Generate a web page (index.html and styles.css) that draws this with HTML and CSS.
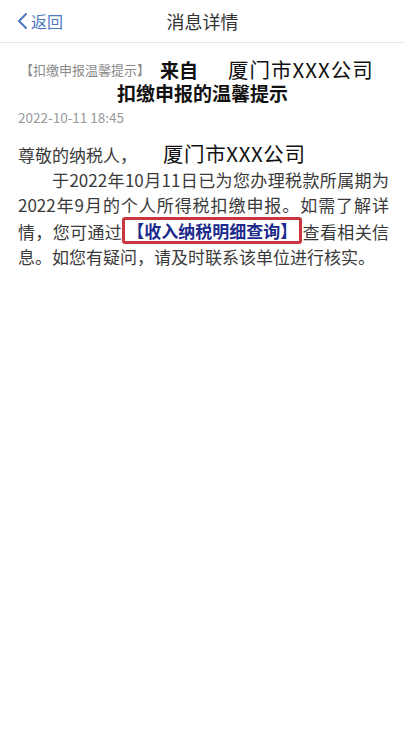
FILE: index.html
```html
<!DOCTYPE html>
<html lang="zh-CN">
<head>
<meta charset="utf-8">
<title>消息详情</title>
<link rel="stylesheet" href="styles.css">
</head>
<body>
<header class="nav">
  <a class="back"><svg class="chev" width="12" height="18" viewBox="0 0 12 18"><path d="M10 2 L3 9 L10 16" fill="none" stroke="#4a78c2" stroke-width="2" stroke-linecap="round" stroke-linejoin="round"/></svg><span>返回</span></a>
  <h1 class="nav-title">消息详情</h1>
</header>
<main class="content">
  <div class="msg-title">
    <div class="t-line1"><span class="tag">【扣缴申报温馨提示】</span><b class="from">来自</b><span class="corp">厦门市XXX公司</span></div>
    <div class="t-line2">扣缴申报的温馨提示</div>
  </div>
  <div class="date">2022-10-11 18:45</div>
  <div class="body">
    <p class="greet">尊敬的纳税人，<span class="corp2">厦门市XXX公司</span></p>
    <p class="para">于2022年10月11日已为您办理税款所属期为2022年9月的个人所得税扣缴申报。如需了解详情，您可通过<span class="link">【收入纳税明细查询】</span>查看相关信息。如您有疑问，请及时联系该单位进行核实。</p>
  </div>
</main>
</body>
</html>
```

FILE: styles.css
```css
* { box-sizing: border-box; }
html, body { margin: 0; padding: 0; background: #fff; }
body {
  width: 405px;
  height: 738px;
  font-family: "Noto Sans CJK SC", "Noto Sans", sans-serif;
  color: #3a3a3a;
}
.nav {
  position: relative;
  height: 43px;
  border-bottom: 1px solid #e6e6e6;
  display: flex;
  align-items: center;
  justify-content: center;
}
.back {
  position: absolute;
  left: 16px;
  top: 11px;
  display: flex;
  align-items: center;
  color: #4a78c2;
  font-size: 16px;
  line-height: 20px;
}
.back .chev { margin-right: 3px; }
.nav-title {
  margin: 0;
  font-size: 18px;
  font-weight: normal;
  color: #333;
  line-height: 43px;
}
.content { padding: 0 16px 0 18px; }
.msg-title {
  padding-top: 11px;
  color: #111;
}
.t-line1 { line-height: 27px; height: 27px; white-space: nowrap; padding-left: 2px; }
.tag { font-size: 13px; color: #8a8a8a; vertical-align: middle; }
.from { font-size: 19px; font-weight: bold; margin-left: 10px; margin-right: 30px; vertical-align: middle; }
.corp { font-size: 20.5px; letter-spacing: 1px; vertical-align: middle; }
.t-line2 { font-size: 19px; font-weight: bold; line-height: 24px; text-align: center; padding-right: 2px; }
.date {
  font-size: 13.5px;
  color: #999;
  line-height: 24px;
}
.body { margin-top: 12px; font-size: 17px; line-height: 25px; }
.body p { margin: 0; }
.greet { white-space: nowrap; }
.corp2 { font-size: 20.5px; letter-spacing: 0.6px; color: #111; margin-left: 26px; }
.para { text-indent: 34px; text-align: justify; }
.link {
  display: inline-block;
  text-indent: 0;
  color: #1c2b8c;
  font-weight: bold;
  line-height: 21px;
  padding: 0 2px;
  border: 3px solid #c9363f;
  border-radius: 3px;
  vertical-align: 1px;
}
```
